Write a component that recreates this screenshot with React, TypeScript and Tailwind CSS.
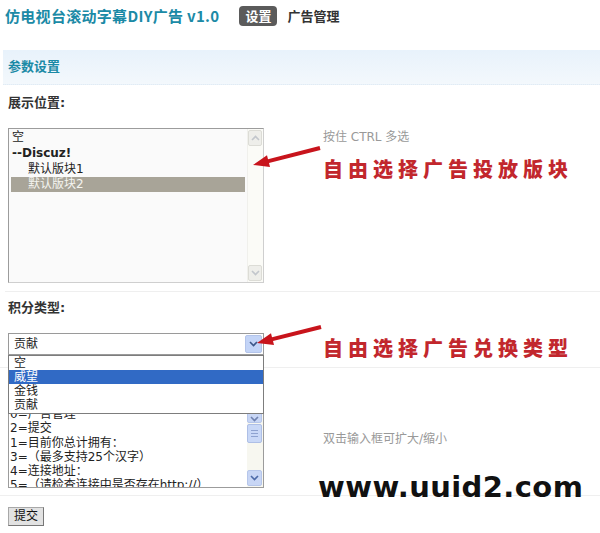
import React from "react";

function Chevron({ dir, color = "#9aa3ad" }: { dir: "up" | "down"; color?: string }) {
  return (
    <svg width="9" height="6" viewBox="0 0 9 6">
      {dir === "up" ? (
        <path d="M1 5 L4.5 1.5 L8 5" fill="none" stroke={color} strokeWidth="1.6" />
      ) : (
        <path d="M1 1 L4.5 4.5 L8 1" fill="none" stroke={color} strokeWidth="1.6" />
      )}
    </svg>
  );
}

function ListScrollbar() {
  return (
    <div className="w-[16px] flex flex-col bg-[#fbfbf7] border-l border-[#f0f0ec] py-[1px] pr-[1px]">
      <div className="h-[16px] flex items-center justify-center bg-[#eeeeea] border border-[#dcdcd6] rounded-[2px]">
        <Chevron dir="up" color="#c2c6cc" />
      </div>
      <div className="flex-1" />
      <div className="h-[16px] flex items-center justify-center bg-[#eeeeea] border border-[#dcdcd6] rounded-[2px]">
        <Chevron dir="down" color="#c2c6cc" />
      </div>
    </div>
  );
}

function AreaScrollbar() {
  return (
    <div className="w-[16px] flex flex-col bg-[#f7f7f0] pr-[1px]">
      <div className="h-[13px] flex items-end justify-center bg-[#c8d6f5] border border-[#b6c6ea] rounded-[2px]">
        <Chevron dir="down" color="#6f82b0" />
      </div>
      <div className="h-[19px] mt-[1px] flex flex-col items-center justify-center gap-[2px] bg-[#c9d8f7] border border-[#aebfe6] rounded-[2px]">
        <div className="w-[7px] h-[1px] bg-[#8ea2d0]" />
        <div className="w-[7px] h-[1px] bg-[#8ea2d0]" />
        <div className="w-[7px] h-[1px] bg-[#8ea2d0]" />
      </div>
      <div className="flex-1" />
      <div className="h-[16px] mb-[1px] flex items-center justify-center bg-[#c8d6f5] border border-[#b6c6ea] rounded-[2px]">
        <Chevron dir="down" color="#4d6aa8" />
      </div>
    </div>
  );
}

export default function App() {
  const cjk = "font-['DejaVu_Sans','Noto_Sans_CJK_SC',sans-serif]";
  return (
    <div className={`relative w-[600px] h-[533px] bg-white overflow-hidden text-[#333] ${cjk}`}>
      {/* header */}
      <div className="flex items-center h-[20px] mt-[6px] pl-[5px]">
        <div className="text-[15px] font-bold text-[#1b8aa6] font-['Noto_Sans_CJK_SC',sans-serif] leading-[20px] tracking-[0.3px]">
          仿电视台滚动字幕DIY广告 v1.0
        </div>
        <div className="ml-[20px] h-[20px] px-[6px] rounded-[4px] bg-[#5b5b5b] text-white text-[13px] font-bold leading-[20px] font-['Noto_Sans_CJK_SC',sans-serif]">
          设置
        </div>
        <div className="ml-[10px] text-[13px] font-bold text-[#333] leading-[20px] font-['Noto_Sans_CJK_SC',sans-serif]">
          广告管理
        </div>
      </div>

      {/* bar */}
      <div className="mt-[24px] ml-[3px] h-[35px] flex items-center pl-[5px] bg-gradient-to-b from-[#e8f2fb] to-[#f3f8fc] border-b border-dotted border-[#e2ebf3]">
        <span className="text-[13px] font-bold text-[#1b8aa6]">参数设置</span>
      </div>

      {/* section 1 */}
      <div className="pt-[10px] pl-[8px] leading-[16px] text-[13px] font-bold text-[#333]">展示位置:</div>
      <div className="mt-[17px] flex">
        <div className="ml-[8px] w-[256px] h-[155px] border border-[#9c9c9c] border-r-[#cfcfcf] border-b-[#cfcfcf] bg-[#fafafa] flex">
          <div className="flex-1 px-[2px] text-[12px] text-[#222]">
            <div className="h-[16px] leading-[16px] pl-[1px]">空</div>
            <div className="h-[16px] leading-[16px] pl-[1px] font-bold">--Discuz!</div>
            <div className="h-[16px] leading-[16px] pl-[17px]">默认版块1</div>
            <div className="h-[15px] leading-[15px] pl-[17px] bg-[#a8a498] text-[#f4f4f0]">默认版块2</div>
          </div>
          <ListScrollbar />
        </div>
        <div className="ml-[59px] pt-[1px]">
          <div className="leading-[16px] text-[12px] text-[#999]">按住 CTRL 多选</div>
          <div className="mt-[12px] leading-[24px] text-[20px] font-black tracking-[5px] text-[#c2272d] font-['Noto_Sans_CJK_SC',sans-serif]">
            自由选择广告投放版块
          </div>
        </div>
      </div>
      <div className="mt-[8px] ml-[5px] border-t border-[#efefef]" />

      {/* section 2 */}
      <div className="pt-[8px] pl-[8px] leading-[16px] text-[13px] font-bold text-[#333]">积分类型:</div>
      <div className="mt-[17px] flex">
        <div className="ml-[8px] w-[256px] h-[22px] border border-[#9a9a9a] bg-white flex items-center">
          <div className="flex-1 pl-[5px] text-[12px] text-[#222] leading-[20px]">贡献</div>
          <div className="w-[17px] h-[18px] mr-[1px] flex items-center justify-center bg-[#c3d4f7] border border-[#b3c4ea] rounded-[2px]">
            <Chevron dir="down" color="#3c5688" />
          </div>
        </div>
        <div className="ml-[59px] pt-[3px]">
          <div className="leading-[24px] text-[20px] font-black tracking-[5px] text-[#c2272d] font-['Noto_Sans_CJK_SC',sans-serif]">
            自由选择广告兑换类型
          </div>
        </div>
      </div>
      <div className="mt-[7px] border-t border-[#efefef]" />

      {/* section 3 (label hidden under the open dropdown) */}
      <div className="pt-[8px] h-[24px]" />
      <div className="mt-[17px] flex">
        <div className="ml-[8px] w-[256px] h-[79px] border border-[#9c9c9c] bg-white flex overflow-hidden">
          <div className="flex-1 pl-[1px] -mt-[3px] text-[12px] text-[#222] leading-[14.3px] whitespace-nowrap overflow-hidden">
            <div>0=广告管理</div>
            <div>2=提交</div>
            <div>1=目前你总计拥有：</div>
            <div>3=（最多支持25个汉字）</div>
            <div>4=连接地址：</div>
            <div>5=（请检查连接中是否存在http://）</div>
          </div>
          <AreaScrollbar />
        </div>
        <div className="ml-[59px] mt-[22px]">
          <div className="leading-[16px] text-[12px] text-[#999]">双击输入框可扩大/缩小</div>
        </div>
      </div>
      <div className="mt-[7px] border-t border-[#efefef]" />

      <div className="mt-[7px] ml-[8px]">
        <button className="w-[36px] h-[19px] bg-[#e2e2e2] border border-[#a8a8a8] border-b-[#777] border-r-[#777] text-[12px] text-[#111] leading-[16px]">
          提交
        </button>
      </div>

      {/* dropdown overlay */}
      <div className="absolute left-[8px] top-[355px] w-[256px] border border-[#7d7d7d] bg-white text-[12px] text-[#222] z-10">
        <div className="h-[14px] leading-[14px] pl-[5px]">空</div>
        <div className="h-[14px] leading-[14px] pl-[5px] bg-[#316ac5] text-white">威望</div>
        <div className="h-[14px] leading-[14px] pl-[5px]">金钱</div>
        <div className="h-[15px] leading-[14px] pl-[5px]">贡献</div>
      </div>

      {/* watermark */}
      <div className="absolute left-[318px] top-[473px] text-[29px] font-bold leading-none tracking-[0.4px] text-[#111] font-['DejaVu_Sans',sans-serif] z-20">
        www.uuid2.com
      </div>

      {/* arrows */}
      <svg className="absolute left-0 top-0 pointer-events-none z-20" width="600" height="533" viewBox="0 0 600 533">
        <polygon
          points="253,165 270,166.9 269,163 320.5,149.9 319.5,146.1 268,159.2 267,155.3"
          fill="#c8141c"
        />
        <polygon
          points="257,343 274,344.9 273,341 321.5,328.9 320.5,325.1 272,337.2 271,333.3"
          fill="#c8141c"
        />
      </svg>
    </div>
  );
}
